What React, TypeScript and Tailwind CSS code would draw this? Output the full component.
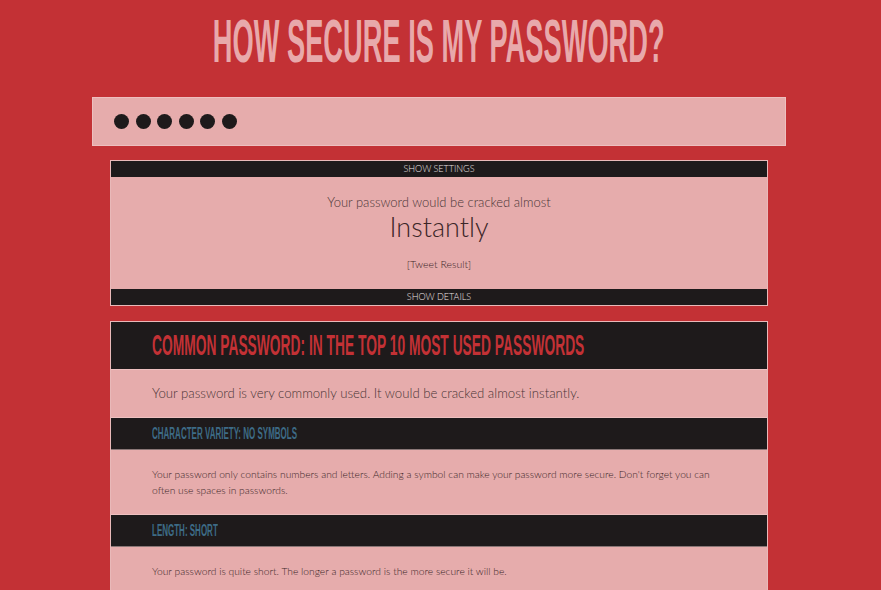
const gothic = { fontFamily: '"Liberation Sans", Arial, sans-serif' }
const lato = { fontFamily: 'Lato, "Open Sans", sans-serif' }

function Squeeze({ children, className = '' }: { children: React.ReactNode; className?: string }) {
  return (
    <span className={`inline-block whitespace-nowrap font-bold uppercase leading-none ${className}`} style={gothic}>
      {children}
    </span>
  )
}

const details = [
  {
    title: 'Character Variety: No Symbols',
    text: "Your password only contains numbers and letters. Adding a symbol can make your password more secure. Don't forget you can often use spaces in passwords.",
  },
  {
    title: 'Length: Short',
    text: 'Your password is quite short. The longer a password is the more secure it will be.',
  },
]

export default function App() {
  return (
    <main className="min-h-screen overflow-hidden bg-[#c33135] pr-[3px]" style={lato}>
      <div className="flex h-[97px] items-center justify-center overflow-hidden pb-[15px]">
        <Squeeze className="origin-center scale-x-[0.47] scale-y-[1.05] text-[58px] text-[#e8a9ab]">How secure is my password?</Squeeze>
      </div>

      <div className="mx-auto flex h-[49px] w-[694px] items-center gap-[6.5px] border border-[#eebfbf] bg-[#e6acac] pl-[21px]">
        {[0, 1, 2, 3, 4, 5].map((i) => (
          <div key={i} className="h-[15px] w-[15px] rounded-full bg-[#1e1a1b]" />
        ))}
      </div>

      <section className="mx-auto mt-[14px] w-[658px] border border-[#e9b9b9] bg-[#e6acac]">
        <div className="flex h-[16px] items-center justify-center bg-[#1e1a1b] text-[9px] font-light uppercase text-[#ece4e4]">
          Show settings
        </div>
        <div className="flex h-[112px] flex-col items-center text-[#4a3536]">
          <p className="mt-[16px] text-[13px] font-light leading-[18px]">Your password would be cracked almost</p>
          <p className="text-[27px] font-light leading-[32px] text-[#3c2628]">Instantly</p>
          <p className="mt-[14px] text-[10.5px] font-light leading-[14px] text-[#3c2628]">[Tweet Result]</p>
        </div>
        <div className="flex h-[16px] items-center justify-center bg-[#1e1a1b] text-[9px] font-light uppercase text-[#ece4e4]">
          Show details
        </div>
      </section>

      <section className="mx-auto mt-[15px] w-[658px] border border-[#e9b9b9] bg-[#e6acac]">
        <div className="flex h-[47px] items-center overflow-hidden bg-[#1e1a1b] pl-[41px]">
          <Squeeze className="origin-left scale-x-[0.476] scale-y-[1.03] text-[29px] text-[#c33135]">
            Common password: in the top 10 most used passwords
          </Squeeze>
        </div>
        <div className="flex h-[48px] items-center border-t border-[#eec0c0] pl-[41px]">
          <p className="text-[13.2px] font-light text-[#4a3536]">
            Your password is very commonly used. It would be cracked almost instantly.
          </p>
        </div>
        {details.map((d) => (
          <div key={d.title}>
            <div className="flex h-[32px] items-center overflow-hidden border-t border-[#eec0c0] bg-[#1e1a1b] pl-[41px]">
              <Squeeze className="origin-left scale-x-[0.5] text-[16px] text-[#3d6b86]">{d.title}</Squeeze>
            </div>
            <div className="border-t border-[#8a7777] pl-[41px] pr-[40px] py-[16px]">
              <p className="text-[10.25px] font-light leading-[16px] text-[#3c2628]">{d.text}</p>
            </div>
          </div>
        ))}
      </section>
    </main>
  )
}
